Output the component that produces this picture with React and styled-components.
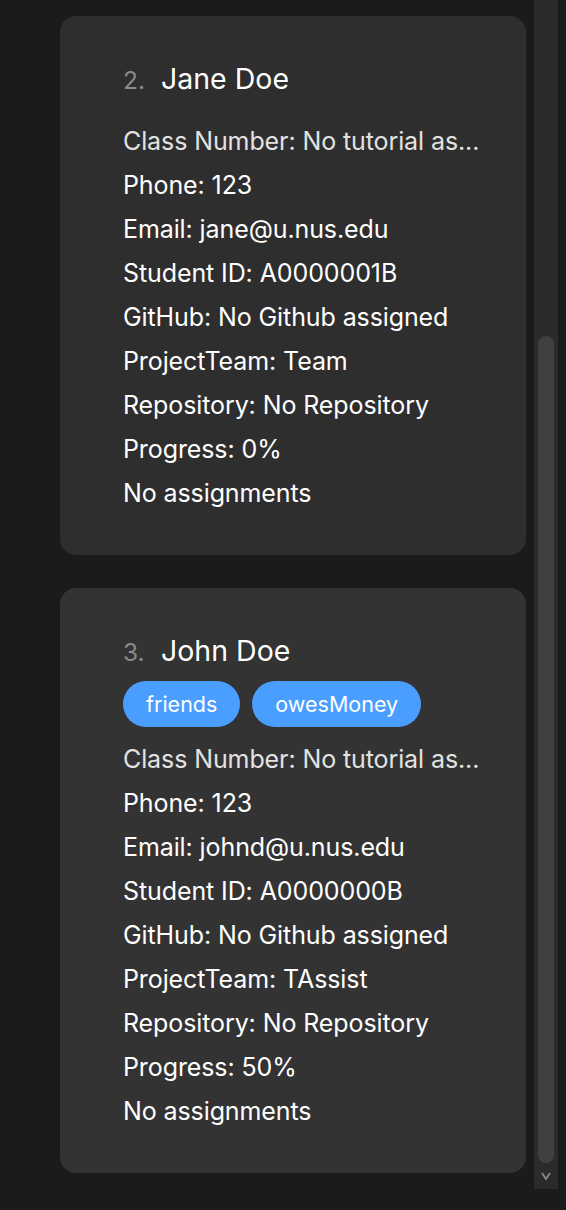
import React from "react";
import styled, { createGlobalStyle } from "styled-components";

const Global = createGlobalStyle`
  html, body { margin: 0; padding: 0; background: #1b1b1b; }
  body { font-family: Inter, "Noto Sans", sans-serif; }
`;

const Page = styled.div`
  display: flex;
  height: 1210px;
  overflow: hidden;
  background: #1b1b1b;
`;

const List = styled.div`
  display: flex;
  flex-direction: column;
  gap: 33px;
  padding: 16px 0 0 60px;
  width: 466px;
`;

const Card = styled.div`
  display: flex;
  flex-direction: column;
  gap: 10px;
  padding: 43px 0 40px 63px;
  border-radius: 16px;
  background: ${(p) => (p.$selected ? "#333333" : "#2e2e2e")};
`;

const NameRow = styled.div`
  display: flex;
  align-items: baseline;
  height: 40px;
  line-height: 40px;
`;

const Index = styled.span`
  font-size: 24.5px;
  color: #8a8a8a;
  width: 38px;
`;

const Name = styled.span`
  font-size: 28.5px;
  color: #ffffff;
`;

const Tags = styled.div`
  display: flex;
  gap: 12px;
`;

const Tag = styled.span`
  display: inline-flex;
  align-items: center;
  height: 46px;
  padding: 0 23px;
  border-radius: 23px;
  background: #4a9eff;
  color: #ffffff;
  font-size: 21.5px;
`;

const Attrs = styled.div`
  display: flex;
  flex-direction: column;
`;

const Attr = styled.div`
  font-size: 25px;
  letter-spacing: -0.1px;
  line-height: 44px;
  height: 44px;
  white-space: nowrap;
  color: ${(p) => (p.$muted ? "#e2e2e2" : "#ffffff")};
`;

const Track = styled.div`
  display: flex;
  flex-direction: column;
  align-items: center;
  margin-left: 8px;
  width: 24px;
  height: 1189px;
  background: #2b2b2b;
`;

const Thumb = styled.div`
  width: 16px;
  border-radius: 8px;
  background: #404040;
`;

const Arrow = styled.div`
  margin-top: auto;
  height: 26px;
  display: flex;
  align-items: center;
  justify-content: center;
`;

const people = [
  {
    index: 2,
    name: "Jane Doe",
    tags: [],
    email: "jane@u.nus.edu",
    id: "A0000001B",
    team: "Team",
    progress: "0%",
  },
  {
    index: 3,
    name: "John Doe",
    tags: ["friends", "owesMoney"],
    email: "johnd@u.nus.edu",
    id: "A0000000B",
    team: "TAssist",
    progress: "50%",
    selected: true,
  },
];

export default function App() {
  return (
    <>
      <Global />
      <Page>
        <List>
          {people.map((p) => (
            <Card key={p.index} $selected={p.selected}>
              <NameRow>
                <Index>{p.index}.</Index>
                <Name>{p.name}</Name>
              </NameRow>
              <Tags>
                {p.tags.map((t) => (
                  <Tag key={t}>{t}</Tag>
                ))}
              </Tags>
              <Attrs>
                <Attr $muted>Class Number: No tutorial as...</Attr>
                <Attr>Phone: 123</Attr>
                <Attr>Email: {p.email}</Attr>
                <Attr>Student ID: {p.id}</Attr>
                <Attr>GitHub: No Github assigned</Attr>
                <Attr>ProjectTeam: {p.team}</Attr>
                <Attr>Repository: No Repository</Attr>
                <Attr>Progress: {p.progress}</Attr>
                <Attr>No assignments</Attr>
              </Attrs>
            </Card>
          ))}
        </List>
        <Track>
          <Thumb style={{ marginTop: 336, height: 827 }} />
          <Arrow>
            <svg width="10" height="8" viewBox="0 0 10 8">
              <path d="M1 1 L5 7 L9 1" fill="none" stroke="#8a8a8a" strokeWidth="1.8" />
            </svg>
          </Arrow>
        </Track>
      </Page>
    </>
  );
}
